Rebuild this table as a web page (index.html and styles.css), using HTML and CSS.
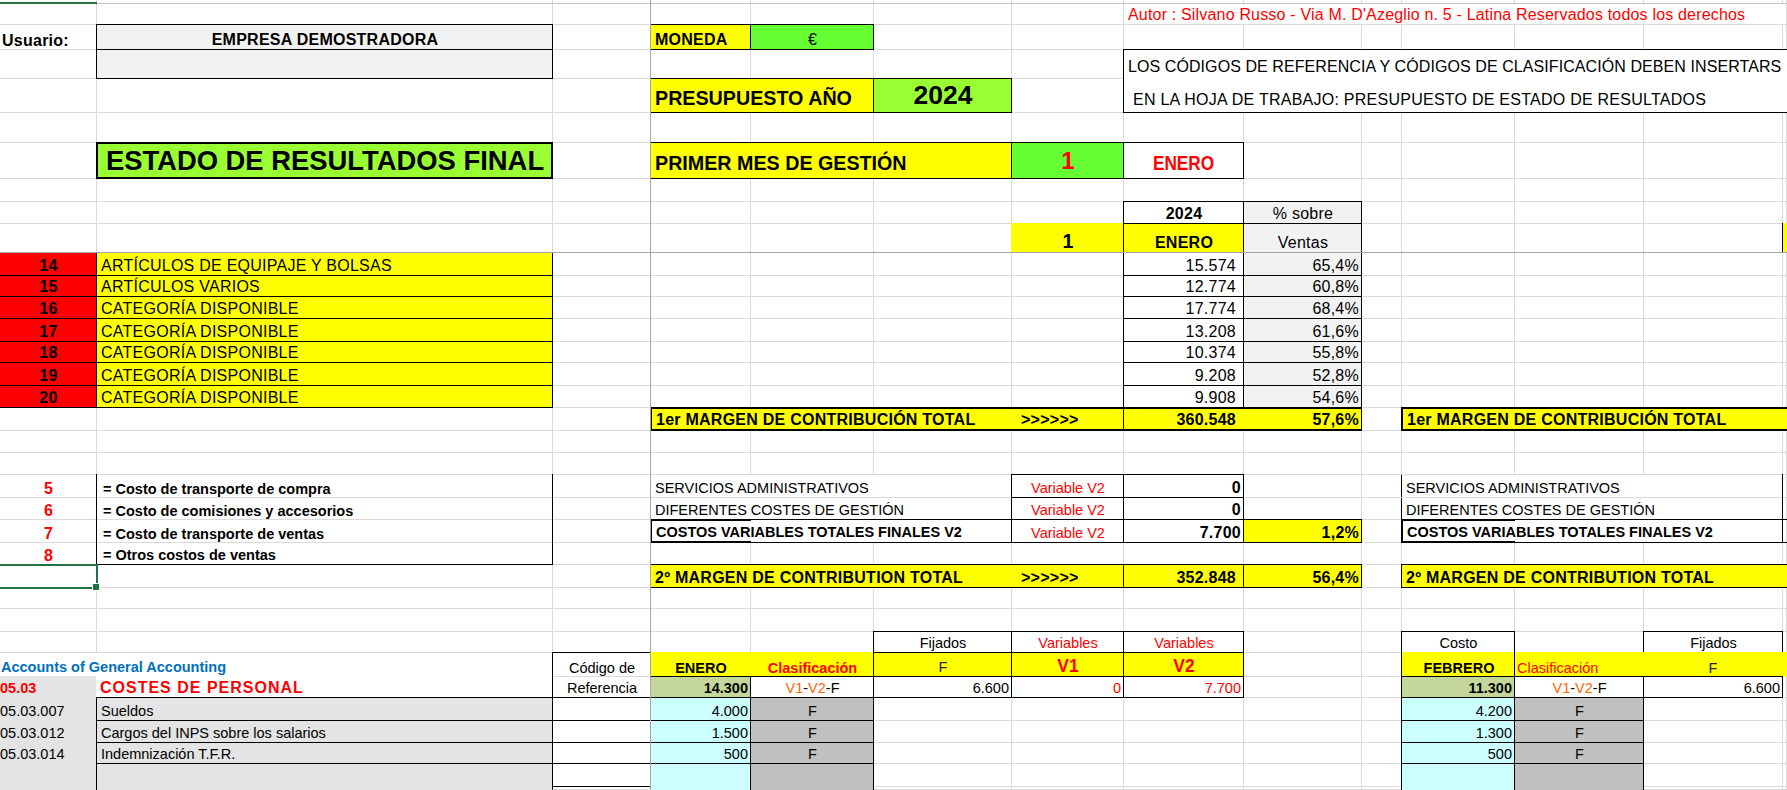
FILE: index.html
```html
<!DOCTYPE html>
<html lang="es">
<head>
<meta charset="utf-8">
<title>Estado de resultados final</title>
<link rel="stylesheet" href="styles.css">
</head>
<body>
<div class="sheet">
  <!-- grid lines -->
  <div class="vl c1"></div><div class="vl c2"></div><div class="vl c3"></div><div class="vl c4"></div><div class="vl c5"></div><div class="vl c6"></div><div class="vl c7"></div><div class="vl c8"></div><div class="vl c9"></div><div class="vl c10"></div><div class="vl c11"></div><div class="vl c12"></div><div class="vl c13"></div><div class="vl c14"></div>
  <div class="hl top r1"></div><div class="hl r2"></div><div class="hl r3"></div><div class="hl r4"></div><div class="hl r5"></div><div class="hl r6"></div><div class="hl r7"></div><div class="hl r8"></div><div class="hl r9"></div><div class="hl r10"></div><div class="hl r11"></div><div class="hl r12"></div><div class="hl r13"></div><div class="hl r14"></div><div class="hl r15"></div><div class="hl r16"></div><div class="hl r17"></div><div class="hl r18"></div><div class="hl r19"></div><div class="hl r20"></div><div class="hl r21"></div><div class="hl r22"></div><div class="hl r23"></div><div class="hl r24"></div><div class="hl r25"></div><div class="hl r26"></div><div class="hl r27"></div><div class="hl r28"></div><div class="hl r29"></div><div class="hl r30"></div><div class="hl r31"></div><div class="hl r32"></div><div class="hl r33"></div><div class="hl r34"></div><div class="hl r35"></div>
  <div class="hdrA"></div>

  <!-- row 2 -->
  <div class="cell mask c8 s7 r2 red au">Autor : Silvano Russo - Via M. D'Azeglio n. 5 - Latina Reservados todos los derechos</div>

  <!-- row 3 -->
  <div class="cell c1 r3 b pl3">Usuario:</div>
  <div class="cell c2 r3 bx gry b ctr">EMPRESA DEMOSTRADORA</div>
  <div class="cell c4 r3 bx yel b">MONEDA</div>
  <div class="cell c5 r3 bx grn ctr">€</div>

  <!-- row 4 -->
  <div class="cell c2 r4 bx gry"></div>
  <div class="cell c8 s7 r4 wht bt bl bbl pb2 tight">LOS CÓDIGOS DE REFERENCIA Y CÓDIGOS DE CLASIFICACIÓN DEBEN INSERTARS</div>

  <!-- row 5 -->
  <div class="cell c4 s2 r5 bx yel b f20 pb2">PRESUPUESTO AÑO</div>
  <div class="cell c6 r5 bx lime b f26 ctr pb2">2024</div>
  <div class="cell c8 s7 r5 wht bb bl pb3 pl9">EN LA HOJA DE TRABAJO: PRESUPUESTO DE ESTADO DE RESULTADOS</div>

  <!-- row 7 -->
  <div class="cell c2 r7 bx2 lime b f27 ctr mid">ESTADO DE RESULTADOS FINAL</div>
  <div class="cell c4 s3 r7 bx yel b f20 pb3">PRIMER MES DE GESTIÓN</div>
  <div class="cell c7 r7 bx grn red b f24 ctr pb3">1</div>
  <div class="cell c8 r7 bx wht red b ctr pb3"><span class="cal">ENERO</span></div>

  <!-- rows 9-10 -->
  <div class="cell c8 r9 bx b ctr">2024</div>
  <div class="cell c9 r9 bx gry ctr">% sobre</div>
  <div class="cell c7 r10 yel b f20 ctr">1</div>
  <div class="cell c8 r10 bx yel b ctr">ENERO</div>
  <div class="cell c9 r10 bx gry ctr">Ventas</div>
  <div class="cell c14 r10 yel bl"></div>

  <!-- category rows -->
  <div class="cell c1 r11 bx redbg b ctr">14</div><div class="cell c2 r11 bx yel">ARTÍCULOS DE EQUIPAJE Y BOLSAS</div><div class="cell c8 r11 bx rt pr7">15.574</div><div class="cell c9 r11 bx gry rt">65,4%</div>
  <div class="cell c1 r12 bx redbg b ctr">15</div><div class="cell c2 r12 bx yel">ARTÍCULOS VARIOS</div><div class="cell c8 r12 bx rt pr7">12.774</div><div class="cell c9 r12 bx gry rt">60,8%</div>
  <div class="cell c1 r13 bx redbg b ctr">16</div><div class="cell c2 r13 bx yel">CATEGORÍA DISPONIBLE</div><div class="cell c8 r13 bx rt pr7">17.774</div><div class="cell c9 r13 bx gry rt">68,4%</div>
  <div class="cell c1 r14 bx redbg b ctr">17</div><div class="cell c2 r14 bx yel">CATEGORÍA DISPONIBLE</div><div class="cell c8 r14 bx rt pr7">13.208</div><div class="cell c9 r14 bx gry rt">61,6%</div>
  <div class="cell c1 r15 bx redbg b ctr">18</div><div class="cell c2 r15 bx yel">CATEGORÍA DISPONIBLE</div><div class="cell c8 r15 bx rt pr7">10.374</div><div class="cell c9 r15 bx gry rt">55,8%</div>
  <div class="cell c1 r16 bx redbg b ctr">19</div><div class="cell c2 r16 bx yel">CATEGORÍA DISPONIBLE</div><div class="cell c8 r16 bx rt pr7">9.208</div><div class="cell c9 r16 bx gry rt">52,8%</div>
  <div class="cell c1 r17 bx redbg b ctr">20</div><div class="cell c2 r17 bx yel">CATEGORÍA DISPONIBLE</div><div class="cell c8 r17 bx rt pr7">9.908</div><div class="cell c9 r17 bx gry rt">54,6%</div>

  <!-- row 18: 1er margen -->
  <div class="cell c4 s3 r18 yel b bt2 bb2 bl2">1er MARGEN DE CONTRIBUCIÓN TOTAL</div>
  <div class="cell c7 r18 yel b bt2 bb2 pl10">&gt;&gt;&gt;&gt;&gt;&gt;</div>
  <div class="cell c8 r18 yel b bt2 bb2 bl br rt pr7">360.548</div>
  <div class="cell c9 r18 yel b bt2 bb2 br rt">57,6%</div>
  <div class="cell c11 s4 r18 yel b bt2 bb2 bl2">1er MARGEN DE CONTRIBUCIÓN TOTAL</div>

  <!-- rows 21-24 left legend -->
  <div class="cell c1 r21 red b ctr">5</div><div class="cell c2 r21 bl br b f14 pl6">= Costo de transporte de compra</div>
  <div class="cell c1 r22 red b ctr">6</div><div class="cell c2 r22 bl br b f14 pl6">= Costo de comisiones y accesorios</div>
  <div class="cell c1 r23 red b ctr">7</div><div class="cell c2 r23 bl br b f14 pl6">= Costo de transporte de ventas</div>
  <div class="cell c1 r24 red b ctr">8</div><div class="cell c2 r24 bl br bb b f14 pl6">= Otros costos de ventas</div>

  <!-- rows 21-23 variable costs -->
  <div class="cell mask c4 s3 r21 f14">SERVICIOS ADMINISTRATIVOS</div>
  <div class="cell c7 r21 bx red ctr f14">Variable V2</div>
  <div class="cell c8 r21 bx b rt">0</div>
  <div class="cell mask c4 s3 r22 f14">DIFERENTES COSTES DE GESTIÓN</div>
  <div class="cell c7 r22 bx red ctr f14">Variable V2</div>
  <div class="cell c8 r22 bx b rt">0</div>
  <div class="cell c5 s2 r23 wht bt bb"></div>
  <div class="cell c4 r23 wht bt2 bb2 bl2 b f14">COSTOS VARIABLES TOTALES FINALES V2</div>
  <div class="cell c7 r23 bx red ctr f14">Variable V2</div>
  <div class="cell c8 r23 bx b rt">7.700</div>
  <div class="cell c9 r23 bx yel b rt">1,2%</div>

  <div class="cell mask ml c11 s3 r21 bl f14">SERVICIOS ADMINISTRATIVOS</div>
  <div class="cell c14 r21 bl"></div>
  <div class="cell mask ml c11 s3 r22 bl f14">DIFERENTES COSTES DE GESTIÓN</div>
  <div class="cell c14 r22 bl"></div>
  <div class="cell c12 s2 r23 wht bt bb"></div>
  <div class="cell c11 r23 wht bt2 bb2 bl2 b f14">COSTOS VARIABLES TOTALES FINALES V2</div>
  <div class="cell c14 r23 bl bt bb"></div>

  <!-- row 25: 2º margen -->
  <div class="cell c4 s3 r25 yel b bt bb bl">2º MARGEN DE CONTRIBUTION TOTAL</div>
  <div class="cell c7 r25 yel b bt bb pl10">&gt;&gt;&gt;&gt;&gt;&gt;</div>
  <div class="cell c8 r25 yel b bx rt pr7">352.848</div>
  <div class="cell c9 r25 yel b bx rt">56,4%</div>
  <div class="cell c11 s4 r25 yel b bt bb bl">2º MARGEN DE CONTRIBUTION TOTAL</div>

  <!-- row 28 -->
  <div class="cell c6 r28 bx ctr f14">Fijados</div>
  <div class="cell c7 r28 bx ctr red f14">Variables</div>
  <div class="cell c8 r28 bx ctr red f14">Variables</div>
  <div class="cell c11 r28 bx ctr f14">Costo</div>
  <div class="cell c13 r28 bx ctr f14">Fijados</div>

  <!-- row 29 -->
  <div class="cell mask c1 s2 r29 blue b f14 pl1">Accounts of General Accounting</div>
  <div class="cell c3 r29 bt bl br ctr f14">Código de</div>
  <div class="cell c4 r29 yel b ctr f14">ENERO</div>
  <div class="cell c5 r29 yel b red ctr f14">Clasificación</div>
  <div class="cell c6 r29 bx yel ctr f14 dk">F</div>
  <div class="cell c7 r29 bx yel b red ctr f17">V1</div>
  <div class="cell c8 r29 bx yel b red ctr f17">V2</div>
  <div class="cell c11 r29 yel b ctr bl f14">FEBRERO</div>
  <div class="cell c12 r29 yel red bl br f14 pl2">Clasificación</div>
  <div class="cell c13 r29 yel ctr br f14 dk">F</div>
  <div class="cell c14 r29 yel"></div>

  <!-- row 30 -->
  <div class="cell c1 r30 gry2 red b f14 bb pl1">05.03</div>
  <div class="cell c2 r30 wht red b bb sp">COSTES DE PERSONAL</div>
  <div class="cell c3 r30 bl br bb ctr f14">Referencia</div>
  <div class="cell c4 r30 bx olive b rt f14">14.300</div>
  <div class="cell c5 r30 bx ctr f14"><span class="or">V1</span>-<span class="or">V2</span>-F</div>
  <div class="cell c6 r30 bx rt f14">6.600</div>
  <div class="cell c7 r30 bx rt red f14">0</div>
  <div class="cell c8 r30 bx rt red f14">7.700</div>
  <div class="cell c11 r30 bx olive b rt f14">11.300</div>
  <div class="cell c12 r30 bx ctr f14"><span class="or">V1</span>-<span class="or">V2</span>-F</div>
  <div class="cell c13 r30 bx rt f14">6.600</div>

  <!-- rows 31-34 accounts -->
  <div class="cell c1 r31 gry2 bb f14 pl1">05.03.007</div><div class="cell c2 r31 gry2 bx f14">Sueldos</div><div class="cell c3 r31 bx"></div><div class="cell c4 r31 cyan bx rt f14">4.000</div><div class="cell c5 r31 gry3 bx ctr f14">F</div><div class="cell c11 r31 cyan bx rt f14">4.200</div><div class="cell c12 r31 gry3 bx ctr f14">F</div>
  <div class="cell c1 r32 gry2 bb f14 pl1">05.03.012</div><div class="cell c2 r32 gry2 bx f14">Cargos del INPS sobre los salarios</div><div class="cell c3 r32 bx"></div><div class="cell c4 r32 cyan bx rt f14">1.500</div><div class="cell c5 r32 gry3 bx ctr f14">F</div><div class="cell c11 r32 cyan bx rt f14">1.300</div><div class="cell c12 r32 gry3 bx ctr f14">F</div>
  <div class="cell c1 r33 gry2 bb f14 pl1">05.03.014</div><div class="cell c2 r33 gry2 bx f14">Indemnización T.F.R.</div><div class="cell c3 r33 bx"></div><div class="cell c4 r33 cyan bx rt f14">500</div><div class="cell c5 r33 gry3 bx ctr f14">F</div><div class="cell c11 r33 cyan bx rt f14">500</div><div class="cell c12 r33 gry3 bx ctr f14">F</div>
  <div class="cell c1 r34 gry2 bb"></div><div class="cell c2 r34 gry2 bx"></div><div class="cell c3 r34 bx"></div><div class="cell c4 r34 cyan bx"></div><div class="cell c5 r34 gry3 bx"></div><div class="cell c11 r34 cyan bx"></div><div class="cell c12 r34 gry3 bx"></div>
  <div class="cell c1 r35 gry2"></div><div class="cell c2 r35 gry2 bl br"></div><div class="cell c3 r35 bl br"></div><div class="cell c4 r35 cyan"></div><div class="cell c5 r35 gry3 bl br"></div><div class="cell c11 r35 cyan bl"></div><div class="cell c12 r35 gry3 bl br"></div>

  <!-- frozen pane lines and selection -->
  <div class="frzv"></div>
  <div class="frzh"></div>
  <div class="sel"></div>
</div>
</body>
</html>
```

FILE: styles.css
```css
* { box-sizing: border-box; }
html, body { margin: 0; padding: 0; background: #fff; overflow: hidden; }

.sheet {
  display: grid;
  grid-template-columns: 97px 456px 98px 100px 123px 138px 112px 120px 118px 40px 113px 129px 139px 4px;
  grid-template-rows: 4px 21px 25px 29px 34px 30px 36px 23px 22px 29px 23px 21px 22px 23px 21px 23px 22px 23px 22px 22px 23px 22px 23px 22px 23px 21px 23px 21px 24px 21px 23px 22px 21px 23px 3px;
  width: 1787px;
  height: 790px;
  overflow: hidden;
  font-family: "Liberation Sans", Arial, sans-serif;
  font-size: 16px;
  letter-spacing: .25px;
  color: #000;
}

/* grid lines */
.vl { grid-row: 1 / -1; border-right: 1px solid #dadada; }
.hl { grid-column: 1 / -1; border-bottom: 1px solid #dadada; }
.hl.top { border-bottom-color: #c4c4c4; }
.hdrA { grid-column: 1; grid-row: 1; border-bottom: 2px solid #217346; }

/* placement */
.c1 { grid-column-start: 1; } .c2 { grid-column-start: 2; } .c3 { grid-column-start: 3; }
.c4 { grid-column-start: 4; } .c5 { grid-column-start: 5; } .c6 { grid-column-start: 6; }
.c7 { grid-column-start: 7; } .c8 { grid-column-start: 8; } .c9 { grid-column-start: 9; }
.c10 { grid-column-start: 10; } .c11 { grid-column-start: 11; } .c12 { grid-column-start: 12; }
.c13 { grid-column-start: 13; } .c14 { grid-column-start: 14; }
.s2 { grid-column-end: span 2; } .s3 { grid-column-end: span 3; } .s4 { grid-column-end: span 4; }
.s7 { grid-column-end: span 7; }
.r1 { grid-row-start: 1; } .r2 { grid-row-start: 2; } .r3 { grid-row-start: 3; } .r4 { grid-row-start: 4; }
.r5 { grid-row-start: 5; } .r6 { grid-row-start: 6; } .r7 { grid-row-start: 7; } .r8 { grid-row-start: 8; }
.r9 { grid-row-start: 9; } .r10 { grid-row-start: 10; } .r11 { grid-row-start: 11; } .r12 { grid-row-start: 12; }
.r13 { grid-row-start: 13; } .r14 { grid-row-start: 14; } .r15 { grid-row-start: 15; } .r16 { grid-row-start: 16; }
.r17 { grid-row-start: 17; } .r18 { grid-row-start: 18; } .r19 { grid-row-start: 19; } .r20 { grid-row-start: 20; }
.r21 { grid-row-start: 21; } .r22 { grid-row-start: 22; } .r23 { grid-row-start: 23; } .r24 { grid-row-start: 24; }
.r25 { grid-row-start: 25; } .r26 { grid-row-start: 26; } .r27 { grid-row-start: 27; } .r28 { grid-row-start: 28; }
.r29 { grid-row-start: 29; } .r30 { grid-row-start: 30; } .r31 { grid-row-start: 31; } .r32 { grid-row-start: 32; }
.r33 { grid-row-start: 33; } .r34 { grid-row-start: 34; } .r35 { grid-row-start: 35; }

/* cells */
.cell {
  display: flex;
  align-items: flex-end;
  margin: -1px 0 0 -1px;
  padding: 0 3px 0 4px;
  white-space: nowrap;
  line-height: 1.15;
  min-width: 0;
}
.mask { margin: 0 1px 1px 0; background: #fff; }
.ml { margin-left: -1px; }

/* alignment */
.ctr { justify-content: center; }
.rt { justify-content: flex-end; padding-right: 2px; }
.mid { align-items: center; padding-bottom: 0; }
.pr7 { padding-right: 7px; }
.pl1 { padding-left: 1px; }
.pl2 { padding-left: 2px; }
.pl3 { padding-left: 3px; }
.pl6 { padding-left: 6px; }
.pl9 { padding-left: 9px; }
.pl10 { padding-left: 10px; }
.pb2 { padding-bottom: 2px; }
.pb3 { padding-bottom: 3px; }

/* fonts */
.b { font-weight: 700; }
.au { letter-spacing: .18px; }
.tight { letter-spacing: .08px; }
.f14 { font-size: 14.5px; letter-spacing: 0; }
.f17 { font-size: 17.5px; letter-spacing: 0; }
.f20 { font-size: 19.7px; letter-spacing: 0; }
.f24 { font-size: 24px; letter-spacing: 0; }
.f26 { font-size: 26.5px; letter-spacing: 0; }
.f27 { font-size: 27.4px; letter-spacing: 0; }
.cal { display: inline-block; font-size: 20px; letter-spacing: 0; transform: scaleX(.86); }
.sp { letter-spacing: 1px; }

/* colours */
.red { color: #ff0000; }
.blue { color: #0070c0; }
.dk { color: #262626; }
.or { color: #ff6600; }
.yel { background: #ffff00; }
.grn { background: #66ff33; }
.lime { background: #99ff33; }
.gry { background: #f2f2f2; }
.gry2 { background: #e4e4e4; }
.gry3 { background: #c0c0c0; }
.cyan { background: #ccffff; }
.olive { background: #c4d79b; }
.redbg { background: #ff0000; }
.wht { background: #fff; }

/* borders */
.bx { border: 1px solid #000; }
.bx2 { border: 2px solid #000; }
.bt { border-top: 1px solid #000; }
.bb { border-bottom: 1px solid #000; }
.bl { border-left: 1px solid #000; }
.br { border-right: 1px solid #000; }
.bt2 { border-top: 2px solid #000; }
.bb2 { border-bottom: 2px solid #000; }
.bl2 { border-left: 2px solid #000; }
.bbl { border-bottom: 1px solid #dadada; }

/* frozen panes */
.frzv { grid-column: 4; grid-row: 1 / -1; margin-left: -1px; border-left: 1px solid #a6a6a6; }
.frzh { grid-column: 1 / -1; grid-row: 11; margin-top: -1px; border-top: 1px solid #a6a6a6; }

/* selected cell */
.sel {
  grid-column: 1;
  grid-row: 25;
  position: relative;
  margin: -1px -1px -1px 0;
  border: 2px solid #217346;
  border-left: 0;
}
.sel::after {
  content: "";
  position: absolute;
  right: -4px;
  bottom: -4px;
  width: 6px;
  height: 6px;
  background: #217346;
  border: 1px solid #fff;
}
```
